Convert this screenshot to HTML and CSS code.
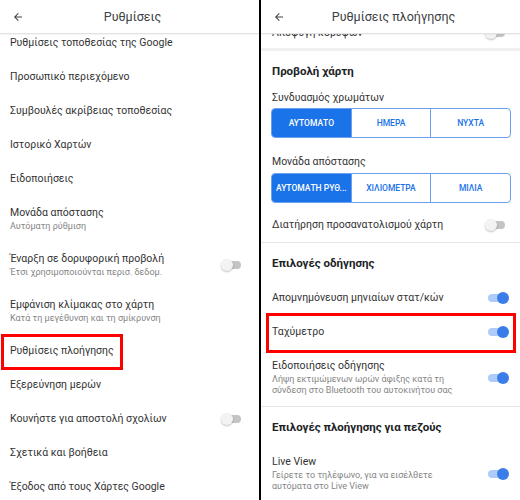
FILE: index.html
```html
<!DOCTYPE html>
<html lang="el">

<head>
    <meta charset="UTF-8">
    <meta name="viewport" content="width=device-width, initial-scale=1.0">
    <title>Ρυθμίσεις</title>
    <link rel="stylesheet" href="styles.css">
</head>

<body>
    <div class="screens">
        <!-- left screen: main settings -->
        <section class="panel">
            <header class="topbar">
                <svg class="back" viewBox="0 0 24 24"><path d="M20 11H7.83l5.59-5.59L12 4l-8 8 8 8 1.41-1.41L7.83 13H20v-2z"/></svg>
                <div class="title">Ρυθμίσεις</div>
            </header>
            <div class="scroll">
                <div class="list list-main">
                    <div class="row"><div class="main">Ρυθμίσεις τοποθεσίας της Google</div></div>
                    <div class="row"><div class="main">Προσωπικό περιεχόμενο</div></div>
                    <div class="row"><div class="main">Συμβουλές ακρίβειας τοποθεσίας</div></div>
                    <div class="row"><div class="main">Ιστορικό Χαρτών</div></div>
                    <div class="row"><div class="main">Ειδοποιήσεις</div></div>
                    <div class="row two">
                        <div>
                            <div class="main">Μονάδα απόστασης</div>
                            <div class="sub">Αυτόματη ρύθμιση</div>
                        </div>
                    </div>
                    <div class="row two">
                        <div>
                            <div class="main">Έναρξη σε δορυφορική προβολή</div>
                            <div class="sub">Έτσι χρησιμοποιούνται περισ. δεδομ.</div>
                        </div>
                        <span class="toggle"></span>
                    </div>
                    <div class="row two">
                        <div>
                            <div class="main">Εμφάνιση κλίμακας στο χάρτη</div>
                            <div class="sub">Κατά τη μεγέθυνση και τη σμίκρυνση</div>
                        </div>
                    </div>
                    <div class="row marked">
                        <div class="main">Ρυθμίσεις πλοήγησης</div>
                        <span class="mark mark-left"></span>
                    </div>
                    <div class="row"><div class="main">Εξερεύνηση μερών</div></div>
                    <div class="row">
                        <div class="main">Κουνήστε για αποστολή σχολίων</div>
                        <span class="toggle"></span>
                    </div>
                    <div class="row"><div class="main">Σχετικά και βοήθεια</div></div>
                    <div class="row"><div class="main">Έξοδος από τους Χάρτες Google</div></div>
                </div>
            </div>
        </section>

        <div class="split"></div>

        <!-- right screen: navigation settings -->
        <section class="panel">
            <header class="topbar">
                <svg class="back" viewBox="0 0 24 24"><path d="M20 11H7.83l5.59-5.59L12 4l-8 8 8 8 1.41-1.41L7.83 13H20v-2z"/></svg>
                <div class="title">Ρυθμίσεις πλοήγησης</div>
            </header>
            <div class="scroll">
                <div class="list list-nav">
                    <div class="row first">
                        <div class="main">Αποφυγή κορυφών</div>
                        <span class="toggle"></span>
                    </div>
                    <div class="band"></div>

                    <div class="heading">Προβολή χάρτη</div>
                    <div class="field-label">Συνδυασμός χρωμάτων</div>
                    <div class="seg">
                        <div class="seg-item active">ΑΥΤΟΜΑΤΟ</div>
                        <div class="seg-item">ΗΜΕΡΑ</div>
                        <div class="seg-item">ΝΥΧΤΑ</div>
                    </div>
                    <div class="field-label second">Μονάδα απόστασης</div>
                    <div class="seg seg-second">
                        <div class="seg-item active">ΑΥΤΟΜΑΤΗ ΡΥΘ...</div>
                        <div class="seg-item">ΧΙΛΙΟΜΕΤΡΑ</div>
                        <div class="seg-item">ΜΙΛΙΑ</div>
                    </div>
                    <div class="row keep">
                        <div class="main">Διατήρηση προσανατολισμού χάρτη</div>
                        <span class="toggle"></span>
                    </div>
                    <div class="rule"></div>

                    <div class="heading">Επιλογές οδήγησης</div>
                    <div class="row">
                        <div class="main">Απομνημόνευση μηνιαίων στατ/κών</div>
                        <span class="toggle on"></span>
                    </div>
                    <div class="row marked">
                        <div class="main">Ταχύμετρο</div>
                        <span class="toggle on"></span>
                        <span class="mark mark-right"></span>
                    </div>
                    <div class="row tall">
                        <div>
                            <div class="main">Ειδοποιήσεις οδήγησης</div>
                            <div class="sub">Λήψη εκτιμώμενων ωρών άφιξης κατά τη<br>σύνδεση στο Bluetooth του αυτοκινήτου σας</div>
                        </div>
                        <span class="toggle on"></span>
                    </div>
                    <div class="rule"></div>

                    <div class="heading">Επιλογές πλοήγησης για πεζούς</div>
                    <div class="row tall">
                        <div>
                            <div class="main">Live View</div>
                            <div class="sub">Γείρετε το τηλέφωνο, για να εισέλθετε<br>αυτόματα στο Live View</div>
                        </div>
                        <span class="toggle on"></span>
                    </div>
                </div>
            </div>
        </section>
    </div>
</body>

</html>
```

FILE: styles.css
```css
body {
    margin: 0;
    font-family: Roboto, "Noto Sans", sans-serif;
    background: #fff;
    color: #333;
}

.screens {
    display: flex;
    height: 500px;
    overflow: hidden;
}

.panel {
    width: 259px;
    display: flex;
    flex-direction: column;
    background: #fff;
}

.split {
    width: 2px;
    background: #000;
}

.topbar {
    height: 33px;
    flex: none;
    display: grid;
    grid-template-columns: 36px 1fr 30px;
    align-items: center;
    border-bottom: 1px solid #e3e3e3;
    box-shadow: 0 1px 1px rgba(0, 0, 0, 0.04);
    position: relative;
    z-index: 1;
    background: #fff;
}

.back {
    width: 12px;
    height: 12px;
    margin-left: 12px;
    fill: #3c4043;
}

.title {
    text-align: center;
    font-size: 12.5px;
    color: #3c4043;
}

.scroll {
    flex: 1;
    overflow: hidden;
}

/* the lists are scrolled a little */
.list-main {
    margin-top: -8px;
}

.list-nav {
    margin-top: -16px;
}

.row {
    display: flex;
    align-items: center;
    justify-content: space-between;
    min-height: 34px;
    padding: 0 14px 0 10px;
    box-sizing: border-box;
    position: relative;
}

.list-nav .row {
    padding: 0 11px 0 11px;
}

.list-nav .row.first {
    min-height: 30px;
}

.row.two {
    min-height: 46px;
}

.row.tall {
    padding-top: 10px;
    padding-bottom: 10px;
}

.main {
    font-size: 10.5px;
    line-height: 14px;
    color: #333;
}

.sub {
    font-size: 9px;
    line-height: 11px;
    margin-top: 1px;
    color: #858585;
}

.band {
    height: 3px;
    background: #f0f0f0;
}

.rule {
    height: 1px;
    background: #e6e6e6;
}

.heading {
    padding: 12px 11px 10px;
    font-size: 11.5px;
    line-height: 16px;
    font-weight: 700;
    color: #202124;
}

.field-label {
    padding: 1px 11px 0;
    font-size: 10.5px;
    line-height: 16px;
    color: #333;
}

.field-label.second {
    padding-top: 16px;
}

.seg {
    display: flex;
    height: 30px;
    margin: 2px 9px 0 10px;
    border: 1px solid #6d9ff0;
    border-radius: 4px;
    overflow: hidden;
    box-sizing: border-box;
}

.seg-second {
    margin-top: 3px;
}

.seg-item {
    flex: 1;
    display: flex;
    align-items: center;
    justify-content: center;
    font-size: 8.5px;
    font-weight: 500;
    color: #1a73e8;
    border-left: 1px solid #6d9ff0;
}

.seg-item:first-child {
    border-left: none;
}

.seg-item.active {
    background: #1a73e8;
    color: #fff;
}

.row.keep {
    margin-top: 5px;
}

/* switches */
.toggle {
    position: relative;
    width: 24px;
    height: 12px;
    flex: none;
}

.toggle::before {
    content: "";
    position: absolute;
    left: 3px;
    top: 2px;
    width: 17px;
    height: 8px;
    border-radius: 4px;
    background: #c4c4c4;
}

.toggle::after {
    content: "";
    position: absolute;
    left: 0;
    top: 0;
    width: 12px;
    height: 12px;
    border-radius: 50%;
    background: #f3f3f3;
    box-shadow: 0 1px 2px rgba(0, 0, 0, 0.25);
}

.toggle.on::before {
    background: #aecbfa;
}

.toggle.on::after {
    left: 12px;
    background: #3b7de8;
    box-shadow: none;
}

/* red annotation boxes */
.mark {
    position: absolute;
    border: 3px solid #f00;
    box-sizing: border-box;
}

.mark-left {
    left: 1px;
    top: 0;
    width: 122px;
    height: 36px;
}

.mark-right {
    left: 5px;
    right: 4px;
    top: -2px;
    bottom: -4px;
}
```
